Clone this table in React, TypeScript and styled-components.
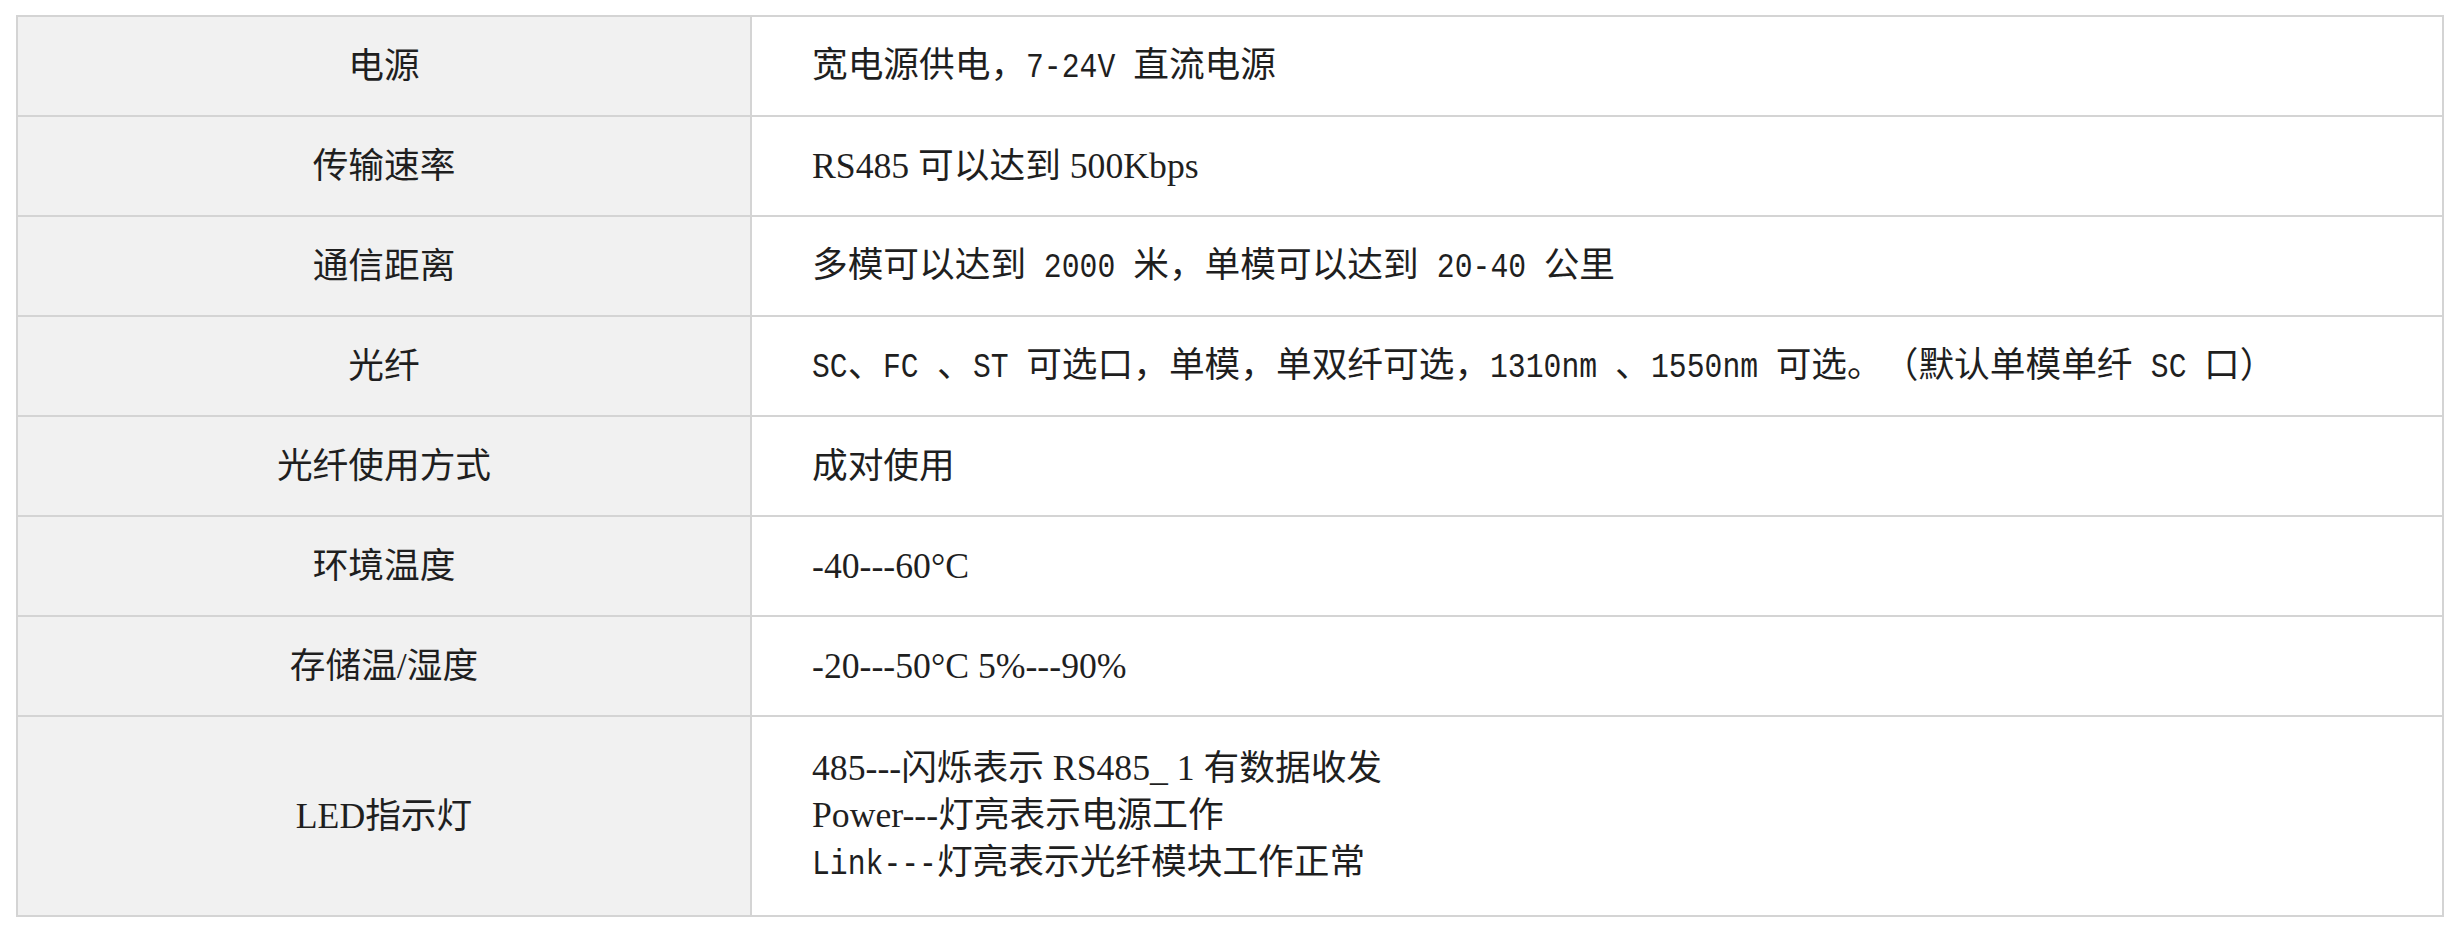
import React from 'react'
import styled, { createGlobalStyle } from 'styled-components'

const GlobalStyle = createGlobalStyle`
  html, body {
    margin: 0;
    padding: 0;
    background: #ffffff;
  }
  body {
    font-family: "Liberation Serif", "Noto Sans CJK SC", serif;
    color: #1f1f1f;
  }
`

const Page = styled.div`
  padding: 15px 16px 16px;
`

const SpecGrid = styled.div`
  display: grid;
  grid-template-columns: 734px 1fr;
  border-top: 2px solid #d4d4d4;
  border-left: 2px solid #d4d4d4;
`

const Cell = styled.div<{ $label?: boolean; $tall?: boolean }>`
  box-sizing: border-box;
  height: ${p => (p.$tall ? 200 : 100)}px;
  border-right: 2px solid #d4d4d4;
  border-bottom: 2px solid #d4d4d4;
  background: ${p => (p.$label ? '#f1f1f1' : '#ffffff')};
  display: flex;
  flex-direction: column;
  justify-content: center;
  align-items: ${p => (p.$label ? 'center' : 'flex-start')};
  padding: ${p => (p.$label ? '0' : '0 0 0 60px')};
  font-size: 35.7px;
  line-height: 47px;
  white-space: nowrap;
  text-spacing-trim: space-all;
`

const Line = styled.div``

// SimSun-like half-width latin: monospace squeezed to half an em per char
const HalfRun = styled.span<{ $chars: number }>`
  display: inline-block;
  font-family: "Liberation Mono", "DejaVu Sans Mono", monospace;
  font-size: 35.7px;
  transform: scaleX(0.8333);
  transform-origin: 0 50%;
  margin-right: ${p => -0.1 * p.$chars}em;
  white-space: pre;
`

function Half({ children }: { children: string }) {
  return <HalfRun $chars={children.length}>{children}</HalfRun>
}

type Row = { label: React.ReactNode; value: React.ReactNode; tall?: boolean }

const rows: Row[] = [
  {
    label: '电源',
    value: (
      <Line>
        宽电源供电，<Half>{'7-24V '}</Half>直流电源
      </Line>
    )
  },
  { label: '传输速率', value: <Line>RS485 可以达到 500Kbps</Line> },
  {
    label: '通信距离',
    value: (
      <Line>
        多模可以达到<Half>{' 2000 '}</Half>米，单模可以达到<Half>{' 20-40 '}</Half>公里
      </Line>
    )
  },
  {
    label: '光纤',
    value: (
      <Line>
        <Half>SC</Half>、<Half>{'FC '}</Half>、<Half>{'ST '}</Half>可选口，单模，单双纤可选，
        <Half>{'1310nm '}</Half>、<Half>{'1550nm '}</Half>可选。（默认单模单纤<Half>{' SC '}</Half>口）
      </Line>
    )
  },
  { label: '光纤使用方式', value: <Line>成对使用</Line> },
  { label: '环境温度', value: <Line>-40---60°C</Line> },
  { label: '存储温/湿度', value: <Line>-20---50°C 5%---90%</Line> },
  {
    label: 'LED指示灯',
    tall: true,
    value: (
      <>
        <Line>485---闪烁表示 RS485_ 1 有数据收发</Line>
        <Line>Power---灯亮表示电源工作</Line>
        <Line>
          <Half>Link---</Half>灯亮表示光纤模块工作正常
        </Line>
      </>
    )
  }
]

export default function App() {
  return (
    <>
      <GlobalStyle />
      <Page>
        <SpecGrid>
          {rows.map((row, i) => (
            <React.Fragment key={i}>
              <Cell $label $tall={row.tall}>
                {row.label}
              </Cell>
              <Cell $tall={row.tall}>{row.value}</Cell>
            </React.Fragment>
          ))}
        </SpecGrid>
      </Page>
    </>
  )
}
